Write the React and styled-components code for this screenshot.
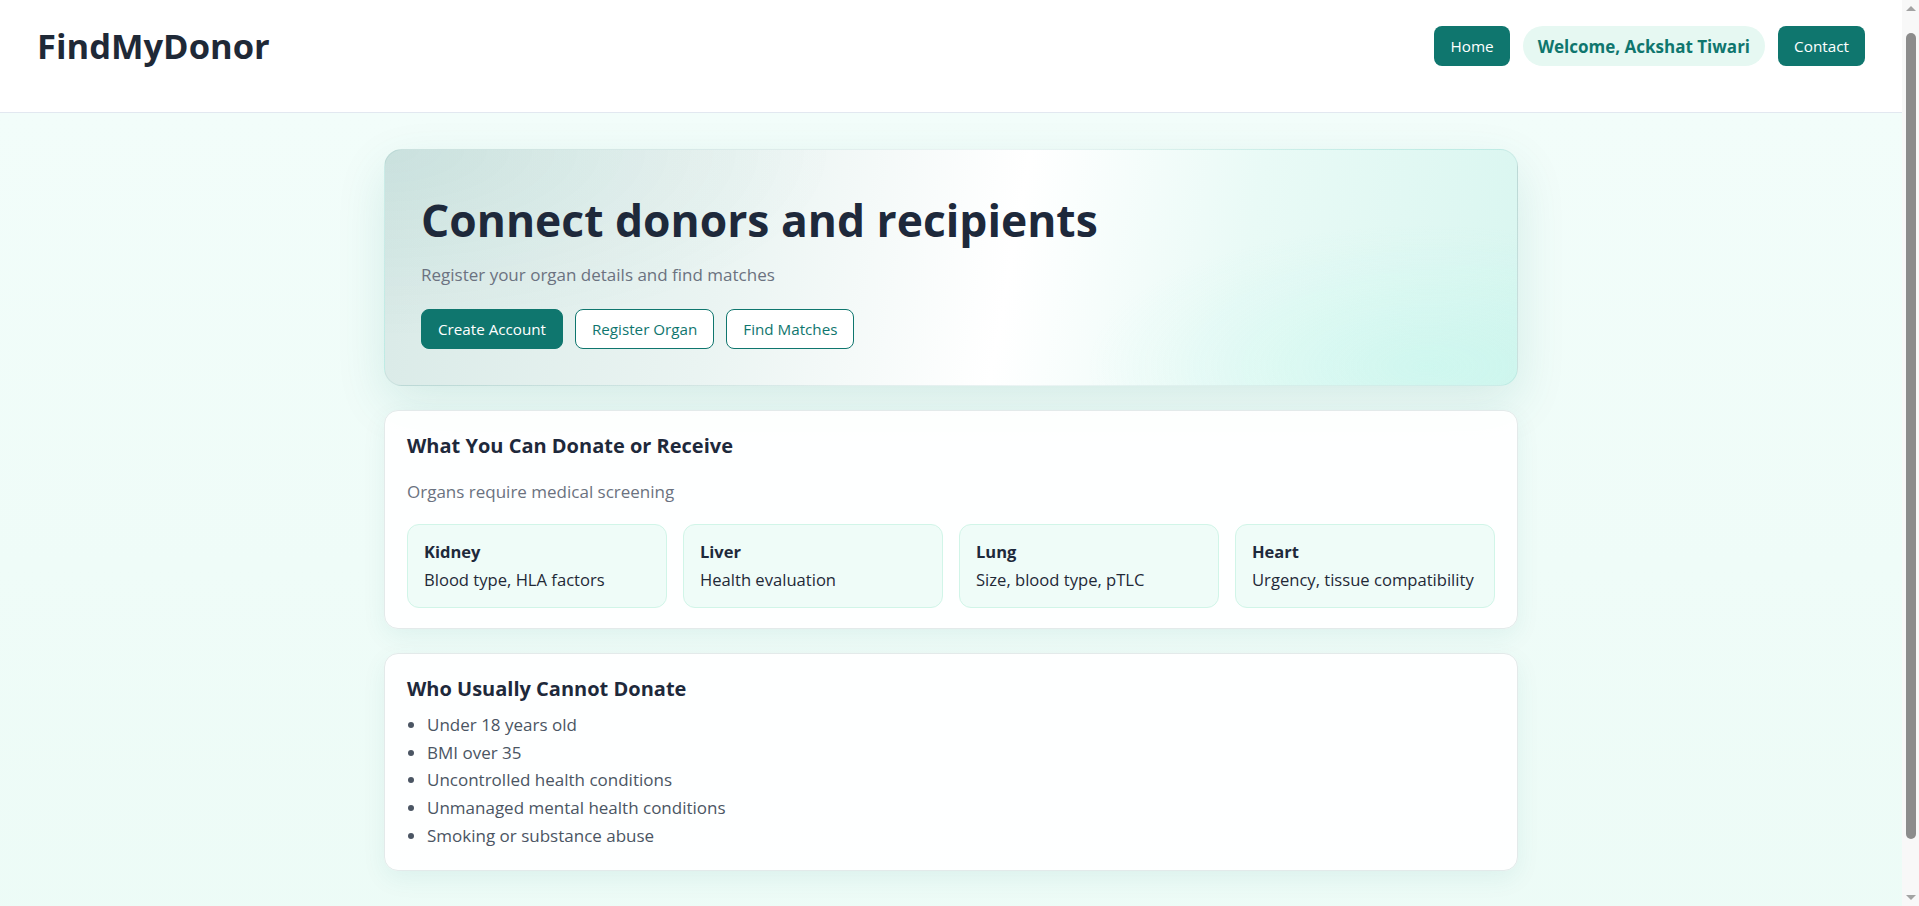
import React from 'react';
import styled, { createGlobalStyle } from 'styled-components';

const GlobalStyle = createGlobalStyle`
    * {
        box-sizing: border-box;
    }
    html, body {
        margin: 0;
        padding: 0;
    }
    body {
        font-family: "Open Sans", "Noto Sans", sans-serif;
        color: #1f2937;
        background: #f0fcf8;
    }
    #root {
        margin-right: 17px;
    }
`;

const organs = [
    { name: 'Kidney', info: 'Blood type, HLA factors' },
    { name: 'Liver', info: 'Health evaluation' },
    { name: 'Lung', info: 'Size, blood type, pTLC' },
    { name: 'Heart', info: 'Urgency, tissue compatibility' },
];

const restrictions = [
    'Under 18 years old',
    'BMI over 35',
    'Uncontrolled health conditions',
    'Unmanaged mental health conditions',
    'Smoking or substance abuse',
];

function App() {
    return (
        <>
            <GlobalStyle />
            <Header>
                <Logo>FindMyDonor</Logo>
                <Nav>
                    <NavButton>Home</NavButton>
                    <Welcome>Welcome, Ackshat Tiwari</Welcome>
                    <NavButton>Contact</NavButton>
                </Nav>
            </Header>
            <Main>
                <Hero>
                    <HeroTitle>Connect donors and recipients</HeroTitle>
                    <HeroText>Register your organ details and find matches</HeroText>
                    <Actions>
                        <ActionButton primary>Create Account</ActionButton>
                        <ActionButton>Register Organ</ActionButton>
                        <ActionButton>Find Matches</ActionButton>
                    </Actions>
                </Hero>
                <Card>
                    <CardTitle>What You Can Donate or Receive</CardTitle>
                    <CardNote>Organs require medical screening</CardNote>
                    <OrganGrid>
                        {organs.map((o) => (
                            <Organ key={o.name}>
                                <OrganName>{o.name}</OrganName>
                                <OrganInfo>{o.info}</OrganInfo>
                            </Organ>
                        ))}
                    </OrganGrid>
                </Card>
                <Card>
                    <CardTitle tight>Who Usually Cannot Donate</CardTitle>
                    <List>
                        {restrictions.map((r) => (
                            <li key={r}>{r}</li>
                        ))}
                    </List>
                </Card>
            </Main>
            {/* browser scrollbar, as seen in the capture */}
            <ScrollTrack>
                <Arrow />
                <Thumb />
                <Arrow down />
            </ScrollTrack>
        </>
    );
}

const Header = styled.header`
    height: 113px;
    display: flex;
    justify-content: space-between;
    align-items: flex-start;
    padding: 26px 37px 0;
    background: #ffffff;
    border-bottom: 1px solid #e2e8f0;
`;

const Logo = styled.h1`
    margin: 0;
    font-size: 34.5px;
    line-height: 40px;
    font-weight: 700;
    color: #1f2937;
`;

const Nav = styled.nav`
    display: flex;
    align-items: center;
    gap: 13px;
`;

const NavButton = styled.button`
    height: 40px;
    padding: 0 16px;
    border: none;
    border-radius: 8px;
    background: #0f766e;
    color: #ffffff;
    font-family: inherit;
    font-size: 15.3px;
    cursor: pointer;
`;

const Welcome = styled.span`
    height: 40px;
    display: inline-flex;
    align-items: center;
    padding: 0 15px;
    border-radius: 999px;
    background: #e6f8f2;
    color: #0f766e;
    font-size: 17px;
    font-weight: 700;
`;

const Main = styled.main`
    min-height: 100vh;
    padding: 36px 0 40px;
    background: linear-gradient(180deg, #f2fdfa 0%, #ecfbf6 100%);
    display: flex;
    flex-direction: column;
    align-items: center;
    gap: 24px;
`;

const Hero = styled.section`
    width: 1134px;
    padding: 44px 36px 36px;
    border-radius: 18px;
    border: 1px solid rgba(15, 118, 110, 0.08);
    background:
        radial-gradient(ellipse 30% 60% at 92% 92%, rgba(153, 246, 228, 0.22), transparent 100%),
        radial-gradient(ellipse 40% 80% at 0% 0%, rgba(15, 118, 110, 0.08), transparent 100%),
        linear-gradient(100deg, #d9eae7 0%, #eaf4f2 30%, #ffffff 55%, #e9faf6 75%, #d9f6f0 100%);
    box-shadow: 0 18px 50px rgba(15, 118, 110, 0.12);
`;

const HeroTitle = styled.h2`
    margin: 0 0 16px;
    font-size: 44.4px;
    line-height: 53px;
    font-weight: 700;
    color: #1e293b;
`;

const HeroText = styled.p`
    margin: 0 0 22px;
    font-size: 17px;
    line-height: 24px;
    color: #6b7280;
`;

const Actions = styled.div`
    display: flex;
    gap: 12px;
`;

const ActionButton = styled.button`
    height: 40px;
    padding: 0 16px;
    border-radius: 8px;
    border: 1px solid #0f766e;
    background: ${(p) => (p.primary ? '#0f766e' : '#ffffff')};
    color: ${(p) => (p.primary ? '#ffffff' : '#0f766e')};
    font-family: inherit;
    font-size: 15.2px;
    cursor: pointer;
`;

const Card = styled.section`
    width: 1134px;
    padding: 22px 22px 20px;
    border-radius: 14px;
    border: 1px solid #e3eaea;
    background: rgba(255, 255, 255, 0.9);
    box-shadow: 0 8px 24px rgba(15, 118, 110, 0.07);
`;

const CardTitle = styled.h3`
    margin: 0 0 ${(p) => (p.tight ? '10px' : '22px')};
    font-size: 20px;
    line-height: 25px;
    font-weight: 700;
    color: #1e293b;
`;

const CardNote = styled.p`
    margin: 0 0 20px;
    font-size: 17px;
    line-height: 24px;
    color: #6b7280;
`;

const OrganGrid = styled.div`
    display: grid;
    grid-template-columns: repeat(4, 1fr);
    gap: 16px;
`;

const Organ = styled.div`
    padding: 15px 12px 15px 16px;
    border-radius: 12px;
    border: 1px solid #d1f5e8;
    background: #effcf8;
`;

const OrganName = styled.div`
    margin-bottom: 4px;
    font-size: 16.5px;
    line-height: 24px;
    font-weight: 700;
    color: #1e293b;
`;

const OrganInfo = styled.div`
    font-size: 16.6px;
    line-height: 24px;
    white-space: nowrap;
    color: #1f2937;
`;

const List = styled.ul`
    margin: 0;
    padding-left: 20px;
    color: #4b5563;
    font-size: 17px;
    line-height: 27.7px;
`;

const ScrollTrack = styled.div`
    position: fixed;
    top: 0;
    right: 0;
    width: 17px;
    height: 100vh;
    display: flex;
    flex-direction: column;
    align-items: center;
    justify-content: space-between;
    padding: 6px 0;
    background: #f8f8f8;
`;

const Arrow = styled.span`
    width: 0;
    height: 0;
    border-left: 5px solid transparent;
    border-right: 5px solid transparent;
    ${(p) => (p.down ? 'border-top: 5px solid #a3a3a3;' : 'border-bottom: 5px solid #a3a3a3;')}
`;

const Thumb = styled.span`
    width: 10px;
    flex: 1;
    margin: 22px 0 56px;
    border-radius: 6px;
    background: #8c8c8c;
`;

export default App;
